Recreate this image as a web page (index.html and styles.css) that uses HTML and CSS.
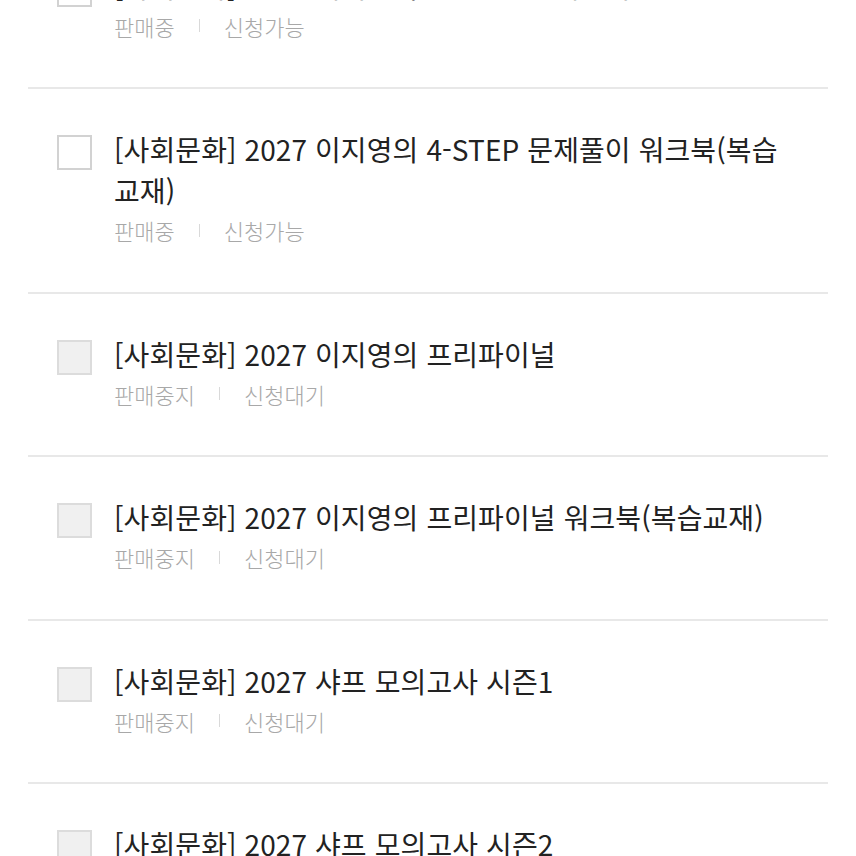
FILE: index.html
```html
<!DOCTYPE html>
<html lang="ko">
<head>
<meta charset="utf-8">
<link rel="stylesheet" href="styles.css">
</head>
<body>
<ul class="list">
  <li class="item">
    <span class="check"></span>
    <div class="body">
      <p class="title">[사회문화] 2027 이지영의 4-STEP 문제풀이</p>
      <p class="meta"><span>판매중</span><span class="sep"></span><span>신청가능</span></p>
    </div>
  </li>
  <li class="item">
    <span class="check"></span>
    <div class="body">
      <p class="title">[사회문화] 2027 이지영의 4-STEP 문제풀이 워크북(복습교재)</p>
      <p class="meta"><span>판매중</span><span class="sep"></span><span>신청가능</span></p>
    </div>
  </li>
  <li class="item">
    <span class="check disabled"></span>
    <div class="body">
      <p class="title">[사회문화] 2027 이지영의 프리파이널</p>
      <p class="meta"><span>판매중지</span><span class="sep"></span><span>신청대기</span></p>
    </div>
  </li>
  <li class="item">
    <span class="check disabled"></span>
    <div class="body">
      <p class="title">[사회문화] 2027 이지영의 프리파이널 워크북(복습교재)</p>
      <p class="meta"><span>판매중지</span><span class="sep"></span><span>신청대기</span></p>
    </div>
  </li>
  <li class="item">
    <span class="check disabled"></span>
    <div class="body">
      <p class="title">[사회문화] 2027 샤프 모의고사 시즌1</p>
      <p class="meta"><span>판매중지</span><span class="sep"></span><span>신청대기</span></p>
    </div>
  </li>
  <li class="item">
    <span class="check disabled"></span>
    <div class="body">
      <p class="title">[사회문화] 2027 샤프 모의고사 시즌2</p>
      <p class="meta"><span>판매중지</span><span class="sep"></span><span>신청대기</span></p>
    </div>
  </li>
</ul>
</body>
</html>
```
FILE: styles.css
```css
html, body {
  margin: 0;
  padding: 0;
  background: #fff;
  overflow: hidden;
}
body {
  font-family: "Noto Sans CJK KR", "Noto Sans", sans-serif;
  color: #222;
}
.list {
  list-style: none;
  margin: -74.5px 28px 0;
  padding: 0;
}
.item {
  display: flex;
  align-items: flex-start;
  padding: 40px 0 46.5px 29px;
  border-bottom: 2px solid #e8e8e8;
}
.check {
  flex: none;
  width: 31px;
  height: 31px;
  margin-top: 6px;
  border: 2px solid #d2d2d2;
  background: #fff;
  margin-right: 22px;
}
.check.disabled {
  background: #f0f0f0;
  border-color: #dcdcdc;
}
.body {
  flex: 1;
  min-width: 0;
  padding-right: 30px;
}
.title {
  margin: 0;
  font-size: 28px;
  line-height: 41px;
  color: #222;
  letter-spacing: 0.1px;
}
.meta {
  margin: 4px 0 0;
  font-size: 22px;
  font-weight: 300;
  line-height: 30px;
  color: #a8a8a8;
  display: flex;
  align-items: center;
}
.sep {
  display: inline-block;
  width: 1px;
  height: 13px;
  background: #d9d9d9;
  margin: 0 24px;
}
```
